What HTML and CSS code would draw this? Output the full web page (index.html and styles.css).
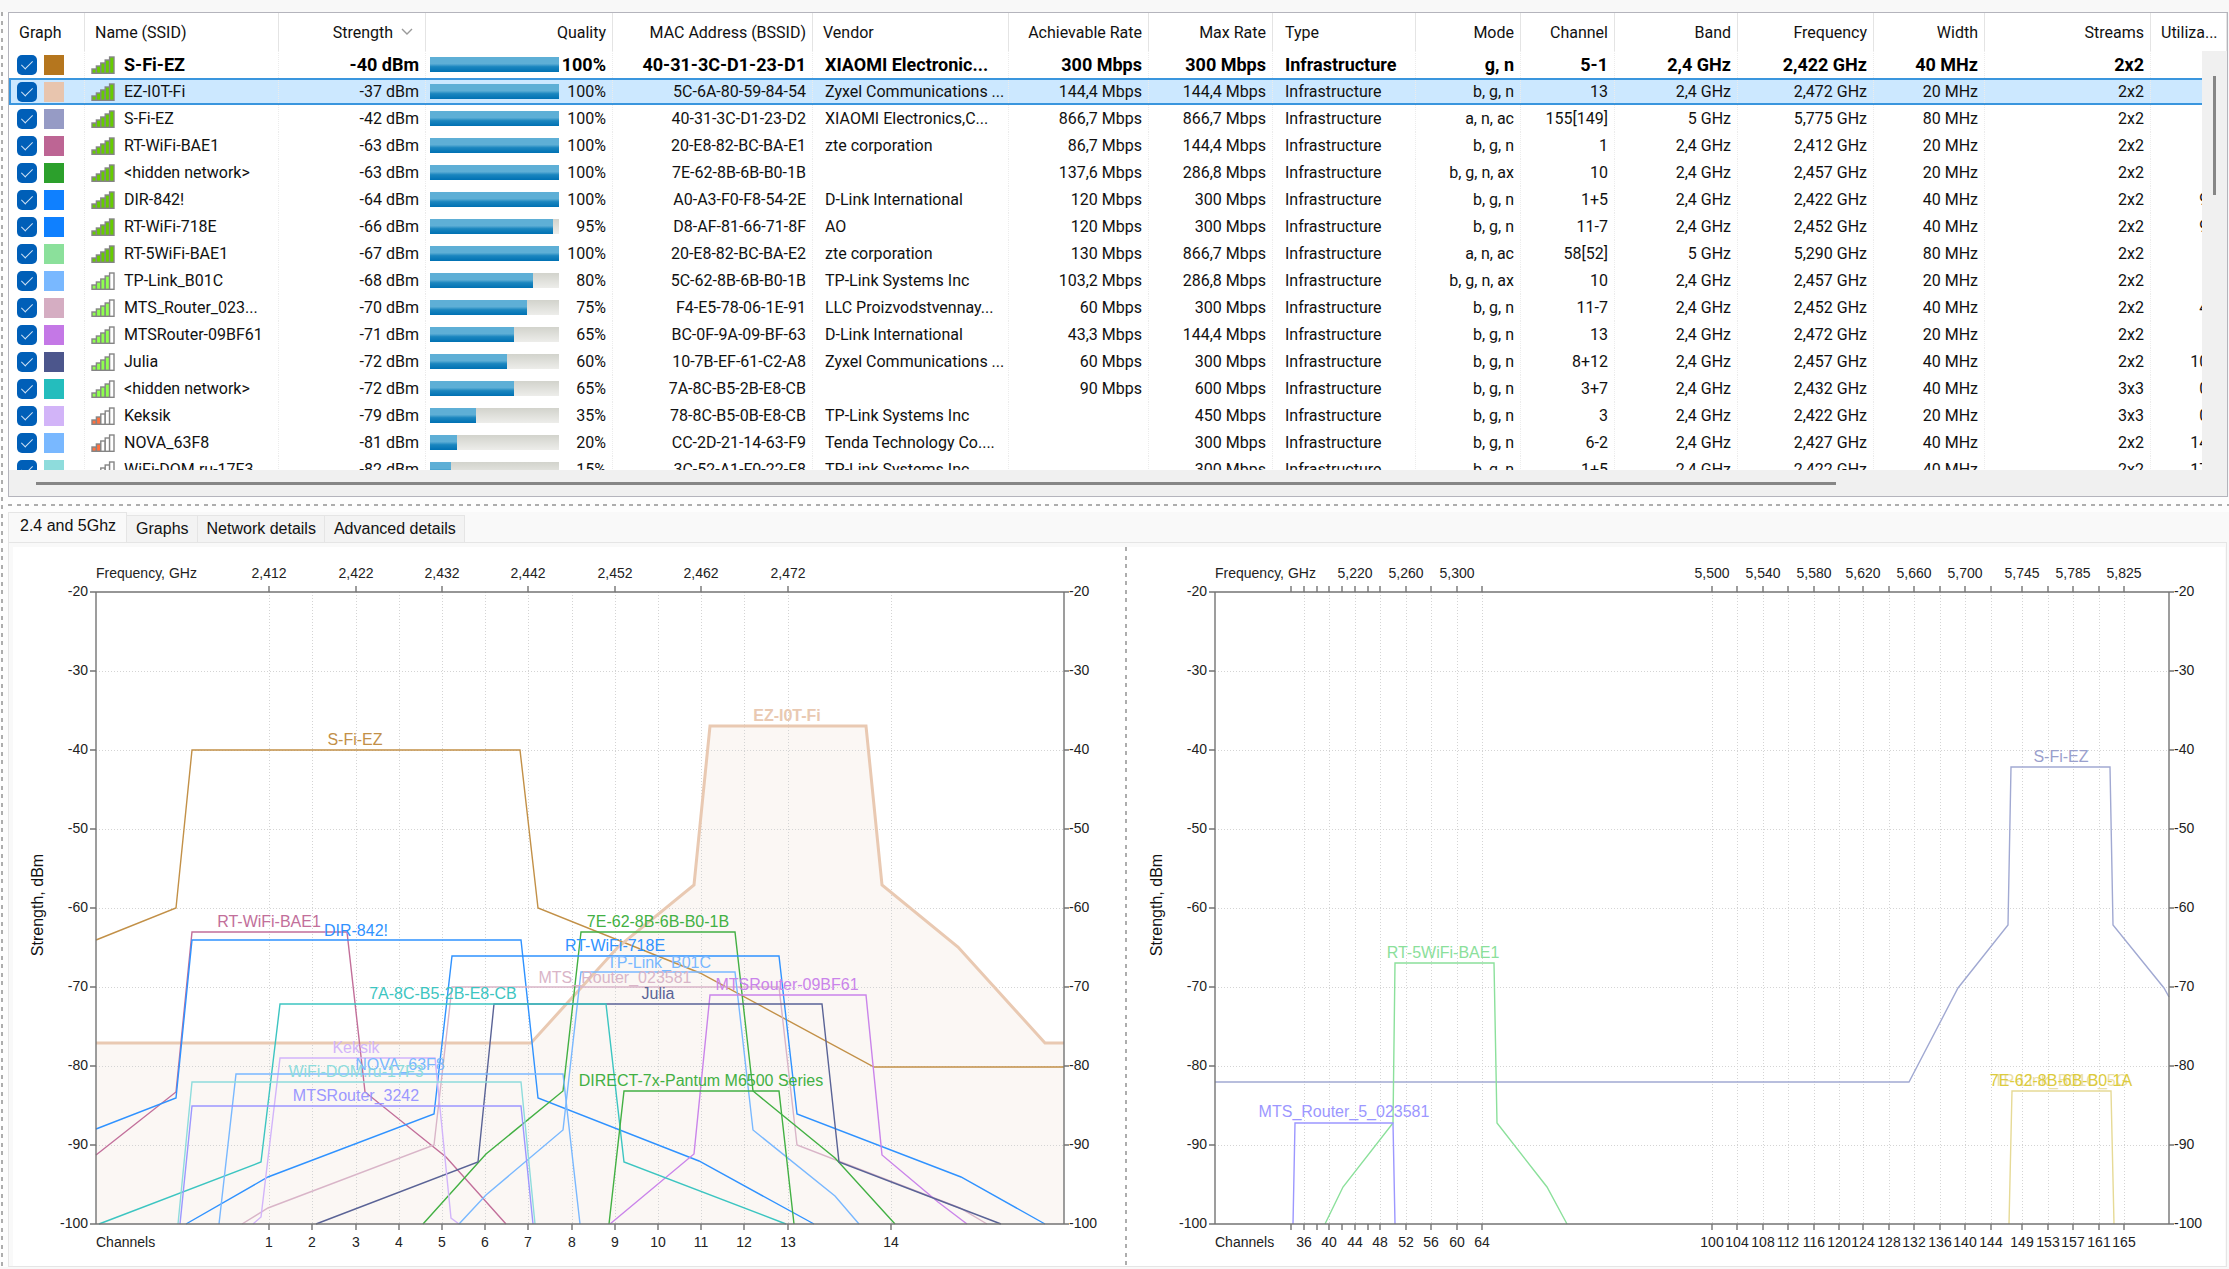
FILE: index.html
```html
<!DOCTYPE html>
<html lang="en">
<head>
<meta charset="utf-8">
<title>Wi-Fi networks</title>
<link rel="stylesheet" href="styles.css">
</head>
<body>
<svg class="defs" aria-hidden="true">
  <symbol id="bars-full" viewBox="0 0 24 18"><g fill="#66cc00" stroke="#858585" stroke-width="1.4"><rect x="1" y="13" width="4.4" height="4.3"/><rect x="5.4" y="10" width="4.4" height="7.3"/><rect x="9.8" y="7" width="4.4" height="10.3"/><rect x="14.2" y="4" width="4.4" height="13.3"/><rect x="18.6" y="1" width="4.4" height="16.3"/></g></symbol>
  <symbol id="bars-good" viewBox="0 0 24 18"><g fill="#8fff4f" stroke="#858585" stroke-width="1.4"><rect x="1" y="13" width="4.4" height="4.3"/><rect x="5.4" y="10" width="4.4" height="7.3"/><rect x="9.8" y="7" width="4.4" height="10.3"/><rect x="14.2" y="4" width="4.4" height="13.3"/><rect x="18.6" y="1" width="4.4" height="16.3" fill="#fff"/></g></symbol>
  <symbol id="bars-weak" viewBox="0 0 24 18"><g fill="#fff" stroke="#858585" stroke-width="1.4"><rect x="1" y="13" width="4.4" height="4.3" fill="#ff7240"/><rect x="5.4" y="10" width="4.4" height="7.3" fill="#ff7240"/><rect x="9.8" y="7" width="4.4" height="10.3"/><rect x="14.2" y="4" width="4.4" height="13.3"/><rect x="18.6" y="1" width="4.4" height="16.3"/></g></symbol>
</svg>
<div class="app">
  <div class="side-split"></div>
  <main class="main">
    <section class="list">
      <div class="list-view">
        <table class="nets">
          <colgroup><col class="c-graph"><col class="c-name"><col class="c-str"><col class="c-qual"><col class="c-mac"><col class="c-vendor"><col class="c-ach"><col class="c-max"><col class="c-type"><col class="c-mode"><col class="c-chan"><col class="c-band"><col class="c-freq"><col class="c-width"><col class="c-streams"><col class="c-util"></colgroup>
          <thead>
            <tr><th class="l">Graph</th><th class="l">Name (SSID)</th><th>Strength<svg class="sort" viewBox="0 0 12 8"><path d="M1 1l5 5 5-5" fill="none" stroke="#999" stroke-width="1.4"/></svg></th><th>Quality</th><th>MAC Address (BSSID)</th><th class="l">Vendor</th><th>Achievable Rate</th><th>Max Rate</th><th class="l type">Type</th><th>Mode</th><th>Channel</th><th>Band</th><th>Frequency</th><th>Width</th><th>Streams</th><th class="l">Utiliza...</th></tr>
          </thead>
          <tbody>
            <tr class="own"><td><span class="pick"><input type="checkbox" checked aria-label="Show S-Fi-EZ 2,4 GHz"><i class="sw sw-ochre"></i></span></td><td><span class="ssid"><svg><use href="#bars-full"/></svg>S-Fi-EZ</span></td><td>-40 dBm</td><td><span class="q"><span class="bar"><span style="width:100%"></span></span>100%</span></td><td>40-31-3C-D1-23-D1</td><td class="l">XIAOMI Electronic...</td><td>300 Mbps</td><td>300 Mbps</td><td class="l type">Infrastructure</td><td>g, n</td><td>5-1</td><td>2,4 GHz</td><td>2,422 GHz</td><td>40 MHz</td><td>2x2</td><td></td></tr>
            <tr class="sel"><td><span class="pick"><input type="checkbox" checked aria-label="Show EZ-I0T-Fi"><i class="sw sw-peach"></i></span></td><td><span class="ssid"><svg><use href="#bars-full"/></svg>EZ-I0T-Fi</span></td><td>-37 dBm</td><td><span class="q"><span class="bar"><span style="width:100%"></span></span>100%</span></td><td>5C-6A-80-59-84-54</td><td class="l">Zyxel Communications ...</td><td>144,4 Mbps</td><td>144,4 Mbps</td><td class="l type">Infrastructure</td><td>b, g, n</td><td>13</td><td>2,4 GHz</td><td>2,472 GHz</td><td>20 MHz</td><td>2x2</td><td></td></tr>
            <tr><td><span class="pick"><input type="checkbox" checked aria-label="Show S-Fi-EZ 5 GHz"><i class="sw sw-slate"></i></span></td><td><span class="ssid"><svg><use href="#bars-full"/></svg>S-Fi-EZ</span></td><td>-42 dBm</td><td><span class="q"><span class="bar"><span style="width:100%"></span></span>100%</span></td><td>40-31-3C-D1-23-D2</td><td class="l">XIAOMI Electronics,C...</td><td>866,7 Mbps</td><td>866,7 Mbps</td><td class="l type">Infrastructure</td><td>a, n, ac</td><td>155[149]</td><td>5 GHz</td><td>5,775 GHz</td><td>80 MHz</td><td>2x2</td><td></td></tr>
            <tr><td><span class="pick"><input type="checkbox" checked aria-label="Show RT-WiFi-BAE1"><i class="sw sw-rose"></i></span></td><td><span class="ssid"><svg><use href="#bars-full"/></svg>RT-WiFi-BAE1</span></td><td>-63 dBm</td><td><span class="q"><span class="bar"><span style="width:100%"></span></span>100%</span></td><td>20-E8-82-BC-BA-E1</td><td class="l">zte corporation</td><td>86,7 Mbps</td><td>144,4 Mbps</td><td class="l type">Infrastructure</td><td>b, g, n</td><td>1</td><td>2,4 GHz</td><td>2,412 GHz</td><td>20 MHz</td><td>2x2</td><td></td></tr>
            <tr><td><span class="pick"><input type="checkbox" checked aria-label="Show hidden network 7E-62"><i class="sw sw-green"></i></span></td><td><span class="ssid"><svg><use href="#bars-full"/></svg>&lt;hidden network&gt;</span></td><td>-63 dBm</td><td><span class="q"><span class="bar"><span style="width:100%"></span></span>100%</span></td><td>7E-62-8B-6B-B0-1B</td><td class="l"></td><td>137,6 Mbps</td><td>286,8 Mbps</td><td class="l type">Infrastructure</td><td>b, g, n, ax</td><td>10</td><td>2,4 GHz</td><td>2,457 GHz</td><td>20 MHz</td><td>2x2</td><td></td></tr>
            <tr><td><span class="pick"><input type="checkbox" checked aria-label="Show DIR-842!"><i class="sw sw-blue"></i></span></td><td><span class="ssid"><svg><use href="#bars-full"/></svg>DIR-842!</span></td><td>-64 dBm</td><td><span class="q"><span class="bar"><span style="width:100%"></span></span>100%</span></td><td>A0-A3-F0-F8-54-2E</td><td class="l">D-Link International</td><td>120 Mbps</td><td>300 Mbps</td><td class="l type">Infrastructure</td><td>b, g, n</td><td>1+5</td><td>2,4 GHz</td><td>2,422 GHz</td><td>40 MHz</td><td>2x2</td><td>9%</td></tr>
            <tr><td><span class="pick"><input type="checkbox" checked aria-label="Show RT-WiFi-718E"><i class="sw sw-blue"></i></span></td><td><span class="ssid"><svg><use href="#bars-full"/></svg>RT-WiFi-718E</span></td><td>-66 dBm</td><td><span class="q"><span class="bar"><span style="width:95%"></span></span>95%</span></td><td>D8-AF-81-66-71-8F</td><td class="l">AO</td><td>120 Mbps</td><td>300 Mbps</td><td class="l type">Infrastructure</td><td>b, g, n</td><td>11-7</td><td>2,4 GHz</td><td>2,452 GHz</td><td>40 MHz</td><td>2x2</td><td>9%</td></tr>
            <tr><td><span class="pick"><input type="checkbox" checked aria-label="Show RT-5WiFi-BAE1"><i class="sw sw-mint"></i></span></td><td><span class="ssid"><svg><use href="#bars-full"/></svg>RT-5WiFi-BAE1</span></td><td>-67 dBm</td><td><span class="q"><span class="bar"><span style="width:100%"></span></span>100%</span></td><td>20-E8-82-BC-BA-E2</td><td class="l">zte corporation</td><td>130 Mbps</td><td>866,7 Mbps</td><td class="l type">Infrastructure</td><td>a, n, ac</td><td>58[52]</td><td>5 GHz</td><td>5,290 GHz</td><td>80 MHz</td><td>2x2</td><td></td></tr>
            <tr><td><span class="pick"><input type="checkbox" checked aria-label="Show TP-Link_B01C"><i class="sw sw-sky"></i></span></td><td><span class="ssid"><svg><use href="#bars-good"/></svg>TP-Link_B01C</span></td><td>-68 dBm</td><td><span class="q"><span class="bar"><span style="width:80%"></span></span>80%</span></td><td>5C-62-8B-6B-B0-1B</td><td class="l">TP-Link Systems Inc</td><td>103,2 Mbps</td><td>286,8 Mbps</td><td class="l type">Infrastructure</td><td>b, g, n, ax</td><td>10</td><td>2,4 GHz</td><td>2,457 GHz</td><td>20 MHz</td><td>2x2</td><td></td></tr>
            <tr><td><span class="pick"><input type="checkbox" checked aria-label="Show MTS_Router_023581"><i class="sw sw-pink"></i></span></td><td><span class="ssid"><svg><use href="#bars-good"/></svg>MTS_Router_023...</span></td><td>-70 dBm</td><td><span class="q"><span class="bar"><span style="width:75%"></span></span>75%</span></td><td>F4-E5-78-06-1E-91</td><td class="l">LLC Proizvodstvennay...</td><td>60 Mbps</td><td>300 Mbps</td><td class="l type">Infrastructure</td><td>b, g, n</td><td>11-7</td><td>2,4 GHz</td><td>2,452 GHz</td><td>40 MHz</td><td>2x2</td><td>4%</td></tr>
            <tr><td><span class="pick"><input type="checkbox" checked aria-label="Show MTSRouter-09BF61"><i class="sw sw-violet"></i></span></td><td><span class="ssid"><svg><use href="#bars-good"/></svg>MTSRouter-09BF61</span></td><td>-71 dBm</td><td><span class="q"><span class="bar"><span style="width:65%"></span></span>65%</span></td><td>BC-0F-9A-09-BF-63</td><td class="l">D-Link International</td><td>43,3 Mbps</td><td>144,4 Mbps</td><td class="l type">Infrastructure</td><td>b, g, n</td><td>13</td><td>2,4 GHz</td><td>2,472 GHz</td><td>20 MHz</td><td>2x2</td><td></td></tr>
            <tr><td><span class="pick"><input type="checkbox" checked aria-label="Show Julia"><i class="sw sw-navy"></i></span></td><td><span class="ssid"><svg><use href="#bars-good"/></svg>Julia</span></td><td>-72 dBm</td><td><span class="q"><span class="bar"><span style="width:60%"></span></span>60%</span></td><td>10-7B-EF-61-C2-A8</td><td class="l">Zyxel Communications ...</td><td>60 Mbps</td><td>300 Mbps</td><td class="l type">Infrastructure</td><td>b, g, n</td><td>8+12</td><td>2,4 GHz</td><td>2,457 GHz</td><td>40 MHz</td><td>2x2</td><td>10%</td></tr>
            <tr><td><span class="pick"><input type="checkbox" checked aria-label="Show hidden network 7A-8C"><i class="sw sw-teal"></i></span></td><td><span class="ssid"><svg><use href="#bars-good"/></svg>&lt;hidden network&gt;</span></td><td>-72 dBm</td><td><span class="q"><span class="bar"><span style="width:65%"></span></span>65%</span></td><td>7A-8C-B5-2B-E8-CB</td><td class="l"></td><td>90 Mbps</td><td>600 Mbps</td><td class="l type">Infrastructure</td><td>b, g, n</td><td>3+7</td><td>2,4 GHz</td><td>2,432 GHz</td><td>40 MHz</td><td>3x3</td><td>0%</td></tr>
            <tr><td><span class="pick"><input type="checkbox" checked aria-label="Show Keksik"><i class="sw sw-lilac"></i></span></td><td><span class="ssid"><svg><use href="#bars-weak"/></svg>Keksik</span></td><td>-79 dBm</td><td><span class="q"><span class="bar"><span style="width:36%"></span></span>35%</span></td><td>78-8C-B5-0B-E8-CB</td><td class="l">TP-Link Systems Inc</td><td></td><td>450 Mbps</td><td class="l type">Infrastructure</td><td>b, g, n</td><td>3</td><td>2,4 GHz</td><td>2,422 GHz</td><td>20 MHz</td><td>3x3</td><td>0%</td></tr>
            <tr><td><span class="pick"><input type="checkbox" checked aria-label="Show NOVA_63F8"><i class="sw sw-sky"></i></span></td><td><span class="ssid"><svg><use href="#bars-weak"/></svg>NOVA_63F8</span></td><td>-81 dBm</td><td><span class="q"><span class="bar"><span style="width:21%"></span></span>20%</span></td><td>CC-2D-21-14-63-F9</td><td class="l">Tenda Technology Co....</td><td></td><td>300 Mbps</td><td class="l type">Infrastructure</td><td>b, g, n</td><td>6-2</td><td>2,4 GHz</td><td>2,427 GHz</td><td>40 MHz</td><td>2x2</td><td>14%</td></tr>
            <tr><td><span class="pick"><input type="checkbox" checked aria-label="Show WiFi-DOM.ru-17F3"><i class="sw sw-aqua"></i></span></td><td><span class="ssid"><svg><use href="#bars-weak"/></svg>WiFi-DOM.ru-17F3</span></td><td>-82 dBm</td><td><span class="q"><span class="bar"><span style="width:16%"></span></span>15%</span></td><td>3C-52-A1-F0-22-F8</td><td class="l">TP-Link Systems Inc</td><td></td><td>300 Mbps</td><td class="l type">Infrastructure</td><td>b, g, n</td><td>1+5</td><td>2,4 GHz</td><td>2,422 GHz</td><td>40 MHz</td><td>2x2</td><td>17%</td></tr>
          </tbody>
        </table>
        <div class="vscroll"><div class="vthumb"></div></div>
      </div>
      <div class="hscroll"><div class="hthumb"></div></div>
    </section>
    <div class="row-split"></div>
    <section class="details">
      <div class="tabs" role="tablist">
        <button class="tab active" role="tab" aria-selected="true">2.4 and 5Ghz</button>
        <button class="tab" role="tab">Graphs</button>
        <button class="tab" role="tab">Network details</button>
        <button class="tab" role="tab">Advanced details</button>
      </div>
      <div class="panel" role="tabpanel">
        <div class="charts">
          <svg class="chart" viewBox="13 547 1112 719" role="img" aria-label="2.4 GHz networks">
            <path class="fill" d="M96 1043H531L618 947L694 885L710 726H866L882 885L958 947L1045 1043H1064V1224H96Z"/>
            <path class="grid" d="M96 671H1064M96 750H1064M96 829H1064M96 908H1064M96 987H1064M96 1066H1064M96 1145H1064M269 592V1224M312 592V1224M356 592V1224M399 592V1224M442 592V1224M485 592V1224M528 592V1224M572 592V1224M615 592V1224M658 592V1224M701 592V1224M744 592V1224M788 592V1224M891 592V1224"/>
            <g class="lines">
              <path stroke="#c29047" d="M96 940L176 908L192 750H520L538 908L700 973L874 1067H1064"/>
              <path class="thick" stroke="#e9c9b2" d="M96 1043H531L618 947L694 885L710 726H866L882 885L958 947L1045 1043H1064"/>
              <path stroke="#c26f9a" d="M96 1155L176 1092L192 932H347L365 1092L446 1157L506 1224"/>
              <path stroke="#2f92ff" d="M96 1129L176 1098L192 940H521L538 1098L699 1161L814 1224"/>
              <path stroke="#d9b5c8" d="M242 1224L268 1208L434 1145L452 987H779L797 1145L960 1208L987 1224"/>
              <path stroke="#79b8ff" d="M459 1224L486 1195L563 1130L581 972H735L753 1130L835 1196L859 1224"/>
              <path stroke="#42b043" d="M423 1224L486 1154L563 1091L581 932H735L753 1091L835 1158L895 1224"/>
              <path stroke="#2f92ff" d="M186 1224L268 1177L434 1114L452 956H779L797 1114L961 1177L1045 1224"/>
              <path stroke="#ca84ea" d="M610 1224L694 1154L710 995H866L882 1155L938 1202L967 1224"/>
              <path stroke="#5a6396" d="M316 1224L478 1162L494 1004H822L839 1162L1001 1224"/>
              <path stroke="#3cc5c1" d="M99 1224L261 1162L280 1004H606L624 1162L786 1224"/>
              <path stroke="#d2b4fa" d="M253 1224L261 1217L280 1058H435L451 1218L459 1224"/>
              <path stroke="#79b8ff" d="M219 1224L236 1074H563L580 1224"/>
              <path stroke="#8edcdc" d="M178 1224L192 1082H521L535 1224"/>
              <path stroke="#9c97ff" d="M180 1224L192 1106H521L533 1224"/>
              <path stroke="#42b043" d="M609 1224L624 1091H779L794 1224"/>
            </g>
            <path class="axis" d="M96 1224V592H1064V1224ZM90 592H96M90 671H96M90 750H96M90 829H96M90 908H96M90 987H96M90 1066H96M90 1145H96M90 1224H96M1064 592H1069M1064 671H1069M1064 750H1069M1064 829H1069M1064 908H1069M1064 987H1069M1064 1066H1069M1064 1145H1069M1064 1224H1069M269 586V592M356 586V592M442 586V592M528 586V592M615 586V592M701 586V592M788 586V592M269 1224V1230M312 1224V1230M356 1224V1230M399 1224V1230M442 1224V1230M485 1224V1230M528 1224V1230M572 1224V1230M615 1224V1230M658 1224V1230M701 1224V1230M744 1224V1230M788 1224V1230M891 1224V1230"/>
            <g class="scale">
              <text x="96" y="578">Frequency, GHz</text><text x="96" y="1247">Channels</text>
              <g class="mid"><text x="269" y="578">2,412</text><text x="356" y="578">2,422</text><text x="442" y="578">2,432</text><text x="528" y="578">2,442</text><text x="615" y="578">2,452</text><text x="701" y="578">2,462</text><text x="788" y="578">2,472</text><text x="269" y="1247">1</text><text x="312" y="1247">2</text><text x="356" y="1247">3</text><text x="399" y="1247">4</text><text x="442" y="1247">5</text><text x="485" y="1247">6</text><text x="528" y="1247">7</text><text x="572" y="1247">8</text><text x="615" y="1247">9</text><text x="658" y="1247">10</text><text x="701" y="1247">11</text><text x="744" y="1247">12</text><text x="788" y="1247">13</text><text x="891" y="1247">14</text></g>
              <g class="end"><text x="88" y="596">-20</text><text x="88" y="675">-30</text><text x="88" y="754">-40</text><text x="88" y="833">-50</text><text x="88" y="912">-60</text><text x="88" y="991">-70</text><text x="88" y="1070">-80</text><text x="88" y="1149">-90</text><text x="88" y="1228">-100</text></g>
              <text x="1069" y="596">-20</text><text x="1069" y="675">-30</text><text x="1069" y="754">-40</text><text x="1069" y="833">-50</text><text x="1069" y="912">-60</text><text x="1069" y="991">-70</text><text x="1069" y="1070">-80</text><text x="1069" y="1149">-90</text><text x="1069" y="1228">-100</text>
            </g>
            <text class="ylabel" transform="translate(43 905) rotate(-90)">Strength, dBm</text>
            <g class="names">
              <text x="355" y="745" fill="#c29047">S-Fi-EZ</text>
              <text x="787" y="721" fill="#e9c9b2" class="strong">EZ-I0T-Fi</text>
              <text x="269" y="927" fill="#c26f9a">RT-WiFi-BAE1</text>
              <text x="356" y="936" fill="#2f92ff">DIR-842!</text>
              <text x="658" y="927" fill="#42b043">7E-62-8B-6B-B0-1B</text>
              <text x="615" y="951" fill="#2f92ff">RT-WiFi-718E</text>
              <text x="659" y="968" fill="#79b8ff">TP-Link_B01C</text>
              <text x="615" y="983" fill="#d9b5c8">MTS_Router_023581</text>
              <text x="787" y="990" fill="#ca84ea">MTSRouter-09BF61</text>
              <text x="658" y="999" fill="#5a6396">Julia</text>
              <text x="443" y="999" fill="#3cc5c1">7A-8C-B5-2B-E8-CB</text>
              <text x="356" y="1053" fill="#d2b4fa">Keksik</text>
              <text x="400" y="1070" fill="#79b8ff">NOVA_63F8</text>
              <text x="356" y="1077" fill="#8edcdc">WiFi-DOM.ru-17F3</text>
              <text x="356" y="1101" fill="#9c97ff">MTSRouter_3242</text>
              <text x="701" y="1086" fill="#42b043">DIRECT-7x-Pantum M6500 Series</text>
            </g>
          </svg>
          <div class="chart-split"></div>
          <svg class="chart" viewBox="1127 547 1098 719" role="img" aria-label="5 GHz networks">
            <path class="grid" d="M1215 671H2169M1215 750H2169M1215 829H2169M1215 908H2169M1215 987H2169M1215 1066H2169M1215 1145H2169M1304 592V1224M1329 592V1224M1355 592V1224M1380 592V1224M1406 592V1224M1431 592V1224M1457 592V1224M1482 592V1224M1712 592V1224M1737 592V1224M1763 592V1224M1788 592V1224M1814 592V1224M1839 592V1224M1863 592V1224M1889 592V1224M1914 592V1224M1940 592V1224M1965 592V1224M1991 592V1224M2022 592V1224M2048 592V1224M2073 592V1224M2099 592V1224M2124 592V1224"/>
            <g class="lines">
              <path stroke="#a1a9d2" d="M1215 1082H1909L1958 988L2008 925L2011 767H2110L2113 925L2164 988L2169 997"/>
              <path stroke="#8be09b" d="M1325 1224L1343 1187L1393 1123L1395 963H1494L1497 1123L1547 1187L1567 1224"/>
              <path stroke="#9c97ff" d="M1293 1224L1295 1123H1393L1395 1224"/>
              <path stroke="#e6da96" d="M2009 1224L2012 1091H2111L2114 1224"/>
            </g>
            <path class="axis" d="M1215 1224V592H2169V1224ZM1209 592H1215M1209 671H1215M1209 750H1215M1209 829H1215M1209 908H1215M1209 987H1215M1209 1066H1215M1209 1145H1215M1209 1224H1215M2169 592H2174M2169 671H2174M2169 750H2174M2169 829H2174M2169 908H2174M2169 987H2174M2169 1066H2174M2169 1145H2174M2169 1224H2174"/>
            <path class="axis" d="M1291 586V592M1304 586V592M1317 586V592M1329 586V592M1342 586V592M1355 586V592M1368 586V592M1380 586V592M1406 586V592M1431 586V592M1457 586V592M1482 586V592M1712 586V592M1737 586V592M1763 586V592M1788 586V592M1814 586V592M1839 586V592M1863 586V592M1889 586V592M1914 586V592M1940 586V592M1965 586V592M1991 586V592M2022 586V592M2048 586V592M2073 586V592M2099 586V592M2124 586V592M1291 1224V1230M1304 1224V1230M1317 1224V1230M1329 1224V1230M1342 1224V1230M1355 1224V1230M1368 1224V1230M1380 1224V1230M1406 1224V1230M1431 1224V1230M1457 1224V1230M1482 1224V1230M1712 1224V1230M1737 1224V1230M1763 1224V1230M1788 1224V1230M1814 1224V1230M1839 1224V1230M1863 1224V1230M1889 1224V1230M1914 1224V1230M1940 1224V1230M1965 1224V1230M1991 1224V1230M2022 1224V1230M2048 1224V1230M2073 1224V1230M2099 1224V1230M2124 1224V1230"/>
            <g class="scale">
              <text x="1215" y="578">Frequency, GHz</text><text x="1215" y="1247">Channels</text>
              <g class="mid"><text x="1355" y="578">5,220</text><text x="1406" y="578">5,260</text><text x="1457" y="578">5,300</text><text x="1712" y="578">5,500</text><text x="1763" y="578">5,540</text><text x="1814" y="578">5,580</text><text x="1863" y="578">5,620</text><text x="1914" y="578">5,660</text><text x="1965" y="578">5,700</text><text x="2022" y="578">5,745</text><text x="2073" y="578">5,785</text><text x="2124" y="578">5,825</text><text x="1304" y="1247">36</text><text x="1329" y="1247">40</text><text x="1355" y="1247">44</text><text x="1380" y="1247">48</text><text x="1406" y="1247">52</text><text x="1431" y="1247">56</text><text x="1457" y="1247">60</text><text x="1482" y="1247">64</text><text x="1712" y="1247">100</text><text x="1737" y="1247">104</text><text x="1763" y="1247">108</text><text x="1788" y="1247">112</text><text x="1814" y="1247">116</text><text x="1839" y="1247">120</text><text x="1863" y="1247">124</text><text x="1889" y="1247">128</text><text x="1914" y="1247">132</text><text x="1940" y="1247">136</text><text x="1965" y="1247">140</text><text x="1991" y="1247">144</text><text x="2022" y="1247">149</text><text x="2048" y="1247">153</text><text x="2073" y="1247">157</text><text x="2099" y="1247">161</text><text x="2124" y="1247">165</text></g>
              <g class="end"><text x="1207" y="596">-20</text><text x="1207" y="675">-30</text><text x="1207" y="754">-40</text><text x="1207" y="833">-50</text><text x="1207" y="912">-60</text><text x="1207" y="991">-70</text><text x="1207" y="1070">-80</text><text x="1207" y="1149">-90</text><text x="1207" y="1228">-100</text></g>
              <text x="2174" y="596">-20</text><text x="2174" y="675">-30</text><text x="2174" y="754">-40</text><text x="2174" y="833">-50</text><text x="2174" y="912">-60</text><text x="2174" y="991">-70</text><text x="2174" y="1070">-80</text><text x="2174" y="1149">-90</text><text x="2174" y="1228">-100</text>
            </g>
            <text class="ylabel" transform="translate(1162 905) rotate(-90)">Strength, dBm</text>
            <g class="names">
              <text x="2061" y="762" fill="#9aa0cc">S-Fi-EZ</text>
              <text x="1443" y="958" fill="#8be09b">RT-5WiFi-BAE1</text>
              <text x="1344" y="1117" fill="#9c97ff">MTS_Router_5_023581</text>
              <text x="2061" y="1086" fill="#ebe0a6">TP-Link_B01C_5G</text>
              <text x="2061" y="1086" fill="#dccb3c">7E-62-8B-6B-B0-1A</text>
            </g>
          </svg>
        </div>
      </div>
    </section>
  </main>
</div>
</body>
</html>
```
FILE: styles.css
```css
* { box-sizing: border-box; }

body {
  margin: 0;
  background: #f8f8f8;
  color: #111;
  font: 16px/20px Roboto, "Liberation Sans", sans-serif;
}

.defs { display: none; }

.app {
  display: flex;
  padding-top: 12px;
}

/* draggable splitters */
.side-split {
  flex: none;
  width: 8px;
  background:
    repeating-linear-gradient(180deg, #adadad 0 4px, transparent 4px 9px, #adadad 9px 13px, transparent 13px 17px) 1px 0 / 2px 100% no-repeat,
    #fdfdfd;
}

.row-split {
  height: 15px;
  background:
    repeating-linear-gradient(90deg, #adadad 0 4px, transparent 4px 9px, #adadad 9px 13px, transparent 13px 17px) 0 7px / 100% 2px no-repeat,
    #fdfdfd;
}

.chart-split {
  background: repeating-linear-gradient(180deg, #adadad 0 4px, #fff 4px 9px, #adadad 9px 13px, #fff 13px 17px);
}

.main { flex: 1; min-width: 0; }

/* network list */
.list {
  margin-right: 1px;
  border: 1px solid #b4b4bc;
  background: #fff;
}

.list-view {
  position: relative;
  height: 457px;
  overflow: hidden;
}

.nets {
  width: 100%;
  table-layout: fixed;
  border-collapse: separate;
  border-spacing: 0;
}

.c-graph { width: 76px; }
.c-name { width: 194px; }
.c-str { width: 147px; }
.c-qual { width: 187px; }
.c-mac { width: 200px; }
.c-vendor { width: 196px; }
.c-ach { width: 140px; }
.c-max { width: 124px; }
.c-type { width: 143px; }
.c-mode { width: 105px; }
.c-chan { width: 94px; }
.c-band { width: 123px; }
.c-freq { width: 136px; }
.c-width { width: 111px; }
.c-streams { width: 166px; }
.c-util { width: 76px; }

.nets th,
.nets td {
  padding: 0 6px 0 0;
  text-align: right;
  white-space: nowrap;
  overflow: hidden;
}

.nets th {
  height: 38px;
  padding-top: 2px;
  font-weight: 400;
  border-right: 1px solid #e4e4e4;
}

.nets td {
  height: 27px;
  border-right: 1px dotted #ececec;
}

.nets th.l { text-align: left; padding-left: 10px; }
.nets td.l { text-align: left; padding-left: 12px; }
.nets th.type { padding-left: 12px; }

.own { font-size: 18px; font-weight: 700; color: #000; }

.sel {
  background: #cce8ff;
  outline: 2px solid #3a96de;
  outline-offset: -2px;
}

.sort {
  width: 12px;
  height: 8px;
  margin: 0 6px 2px 8px;
}

.pick {
  display: flex;
  align-items: center;
  gap: 7px;
  padding-left: 8px;
}

.pick input {
  appearance: none;
  display: grid;
  place-items: center;
  width: 20px;
  height: 20px;
  margin: 0;
  border-radius: 5px;
  background: #005fb8;
}

.pick input:checked::after {
  content: "";
  width: 5px;
  height: 10px;
  margin-bottom: 3px;
  border: solid #cfe2f5;
  border-width: 0 1px 1px 0;
  transform: rotate(45deg);
}

.sw { width: 20px; height: 20px; }
.sw-ochre { background: #b5761e; }
.sw-peach { background: #e8c5ae; }
.sw-slate { background: #969bc5; }
.sw-rose { background: #bd6594; }
.sw-green { background: #2ca02c; }
.sw-blue { background: #0f80ff; }
.sw-mint { background: #8be09b; }
.sw-sky { background: #79b8ff; }
.sw-pink { background: #d5adc2; }
.sw-violet { background: #c478e6; }
.sw-navy { background: #4c568c; }
.sw-teal { background: #24bdbd; }
.sw-lilac { background: #d2b4f8; }
.sw-aqua { background: #8edcdc; }

.ssid {
  display: flex;
  align-items: center;
  gap: 9px;
  padding-left: 6px;
}

.ssid svg { width: 24px; height: 18px; }

.q {
  display: flex;
  align-items: center;
  justify-content: space-between;
  padding-left: 4px;
}

.bar {
  width: 129px;
  height: 15px;
  background: linear-gradient(#d2d3cc, #ededea);
}

.bar span {
  display: block;
  height: 100%;
  background: linear-gradient(#5eafd6 0 45%, #1b86bf 65%, #0071b3);
}

.vscroll {
  position: absolute;
  inset: 38px 0 0 auto;
  width: 25px;
  padding: 25px 11px 0;
  background: #f0f0f0;
}

.vthumb { height: 119px; background: #868686; }

.hscroll {
  height: 26px;
  padding: 12px 391px 0 27px;
  background: #f0f0f0;
}

.hthumb { height: 3px; background: #868686; }

/* tabs and charts */
.details {
  padding-right: 2px;
  background: #f9f9f9;
}

.tabs {
  display: flex;
  align-items: flex-end;
  height: 30px;
}

.tab {
  height: 27px;
  padding: 0 8px 0 9px;
  border: 1px solid #e5e5e5;
  border-width: 1px 1px 0 0;
  background: #f3f3f3;
  color: #111;
  font: 16px/20px "Liberation Sans", Arial, sans-serif;
}

.tab.active {
  height: 30px;
  padding: 0 10px 4px 11px;
  border-left-width: 1px;
  background: #f9f9f9;
}

.panel {
  padding: 4px 1px 0 4px;
  border: 1px solid #e5e5e5;
}

.charts {
  display: grid;
  grid-template-columns: 1112fr 2px 1098fr;
  background: #fff;
}

.chart {
  display: block;
  width: 100%;
  font-family: "Liberation Sans", Arial, sans-serif;
}

.fill { fill: #fbf7f4; }
.grid { fill: none; stroke: #d4d4d4; stroke-width: 1; stroke-dasharray: 1 2; shape-rendering: crispEdges; }
.lines { fill: none; stroke-width: 1.4; }
.thick { stroke-width: 3; }
.axis { fill: none; stroke: #747474; stroke-width: 1.4; }
.scale { font-size: 14px; fill: #222; }
.mid, .names, .ylabel { text-anchor: middle; }
.end { text-anchor: end; }
.names, .ylabel { font-size: 16px; }
.ylabel { fill: #111; }
.strong { font-weight: 700; }
```
